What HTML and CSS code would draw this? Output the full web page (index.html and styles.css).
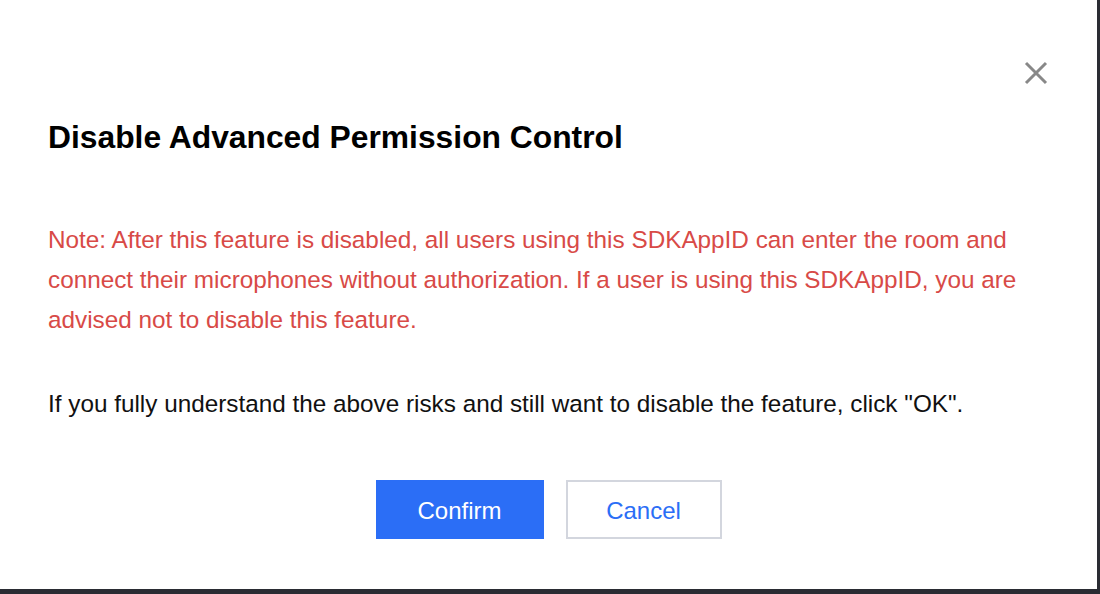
FILE: index.html
```html
<!DOCTYPE html>
<html>
    <head>
        <meta charset="utf-8">
        <link rel="stylesheet" href="styles.css">
    </head>

    <body>
        <div class="dialog">
            <button class="close" type="button" aria-label="Close">
                <svg width="24" height="24" viewBox="0 0 24 24">
                    <path d="M2 2 L22 22 M22 2 L2 22" stroke="#888" stroke-width="3" fill="none"/>
                </svg>
            </button>

            <h1 class="title">Disable Advanced Permission Control</h1>

            <p class="warning">Note: After this feature is disabled, all users using this SDKAppID can enter the room and connect their microphones without authorization. If a user is using this SDKAppID, you are advised not to disable this feature.</p>

            <p class="info">If you fully understand the above risks and still want to disable the feature, click "OK".</p>

            <div class="actions">
                <button class="btn btn-primary" type="button">Confirm</button>
                <button class="btn btn-default" type="button">Cancel</button>
            </div>
        </div>
    </body>
</html>
```

FILE: styles.css
```css
* {
    box-sizing: border-box;
}

body {
    margin: 0;
    padding: 0;
    background-color: #2a2c33;
    font-family: "Liberation Sans", Arial, Helvetica, sans-serif;
}

.dialog {
    position: relative;
    width: 1097px;
    height: 589px;
    background-color: #fff;
    padding: 0 48px;
    overflow: hidden;
}

.close {
    position: absolute;
    top: 61px;
    right: 49px;
    width: 24px;
    height: 24px;
    padding: 0;
    border: none;
    background: none;
    cursor: pointer;
}

.close svg {
    display: block;
}

.title {
    margin: 0;
    padding-top: 117px;
    font-size: 31.8px;
    line-height: 40px;
    font-weight: bold;
    color: #000;
}

.warning {
    margin: 63px 0 0;
    font-size: 24.3px;
    line-height: 40px;
    color: #d84a47;
}

.info {
    margin: 44px 0 0;
    font-size: 24.3px;
    line-height: 40px;
    color: #111;
}

.actions {
    display: flex;
    justify-content: center;
    gap: 22px;
    margin-top: 56px;
    margin-left: -48px;
    margin-right: -48px;
}

.btn {
    height: 59px;
    padding-top: 3px;
    font-family: inherit;
    font-size: 24px;
    cursor: pointer;
}

.btn-primary {
    width: 168px;
    border: none;
    background-color: #2b6ef6;
    color: #fff;
}

.btn-default {
    width: 156px;
    border: 2px solid #d3d6de;
    background-color: #fff;
    color: #2b6ef6;
}
```
